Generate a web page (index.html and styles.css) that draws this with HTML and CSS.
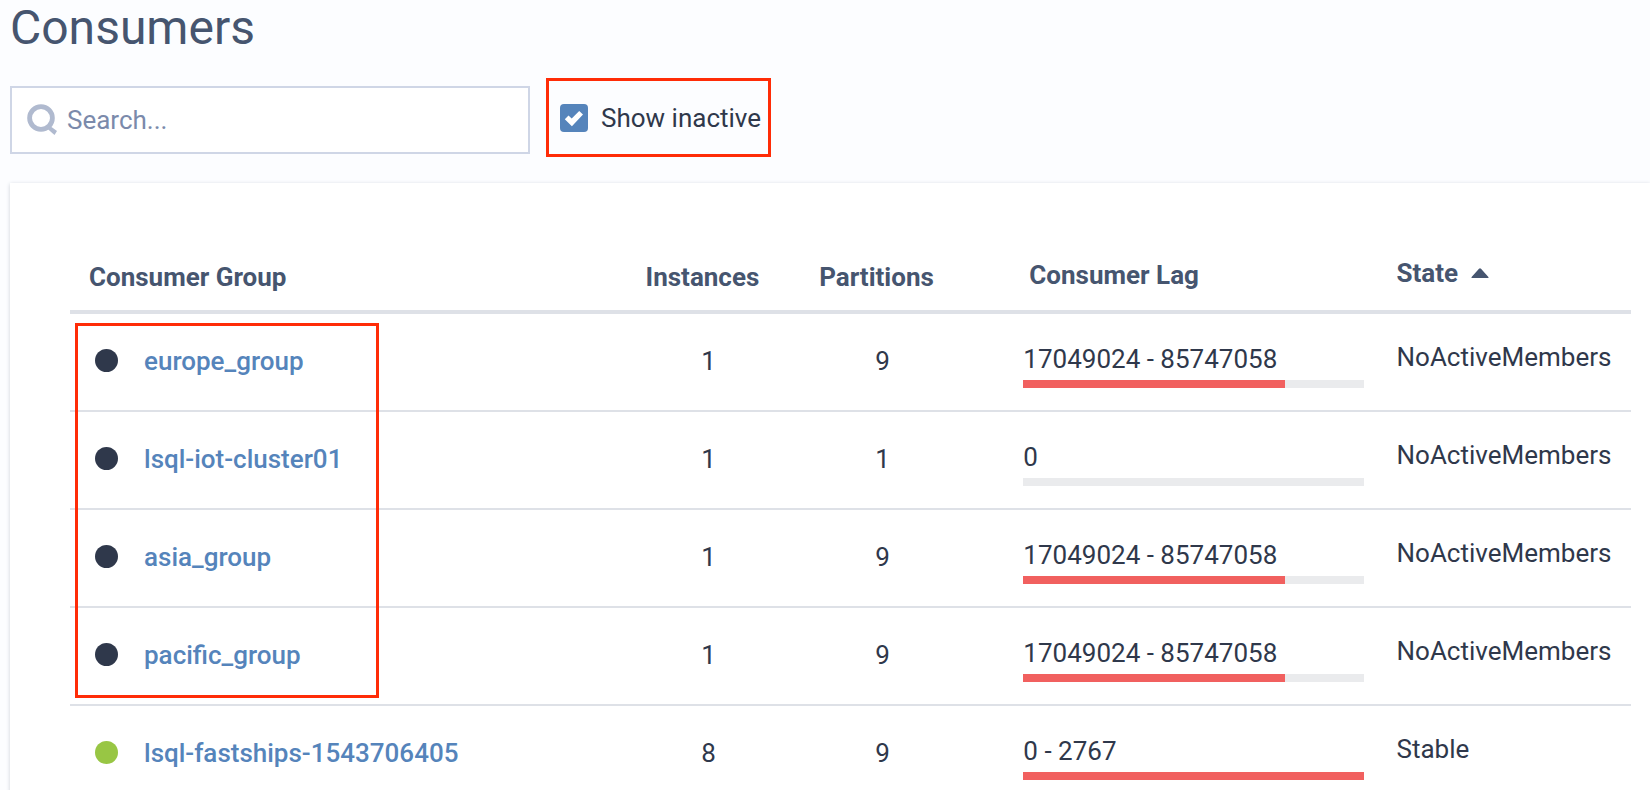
FILE: index.html
```html
<!DOCTYPE html>
<html lang="en">
<head>
<meta charset="utf-8">
<title>Consumers</title>
<link rel="stylesheet" href="styles.css">
</head>
<body>
<main class="page">
  <h1 class="title">Consumers</h1>
  <div class="toolbar">
    <label class="search">
      <svg class="search-icon" viewBox="0 0 30 31" aria-hidden="true"><circle cx="14" cy="14" r="11.4" fill="none" stroke="currentColor" stroke-width="4.8"/><path d="M21 20.5l9 6.5-2.5 4-8-7z" fill="currentColor"/></svg>
      <input class="search-input" type="text" placeholder="Search..." aria-label="Search">
    </label>
    <label class="toggle highlight">
      <input class="toggle-box" type="checkbox" checked>
      <svg class="toggle-tick" viewBox="0 0 28 28" aria-hidden="true"><path d="M4.800 15.300L8.500 11.600L11.700 14.400L19.200 7L23 10.600L11.900 22.300Z" fill="#fff"/></svg>
      <span>Show inactive</span>
    </label>
  </div>
  <section class="card">
    <div class="table-wrap">
      <table class="consumers">
        <colgroup><col class="col-group"><col class="col-instances"><col class="col-partitions"><col class="col-lag"><col class="col-state"></colgroup>
        <thead>
          <tr><th class="group">Consumer Group</th><th class="count">Instances</th><th class="count">Partitions</th><th class="lag">Consumer Lag</th><th class="state" aria-sort="ascending"><button class="sort" type="button">State<svg class="sort-icon" viewBox="0 0 18 10" aria-hidden="true"><path d="M1 10Q0 10 .6 9L8 .8Q9-.4 10 .8L17.400 9Q18 10 17 10Z" fill="currentColor"/></svg></button></th></tr>
        </thead>
        <tbody>
          <tr><td class="group"><div class="name"><span class="dot"></span><a href="#europe">europe_group</a></div></td><td class="count">1</td><td class="count">9</td><td class="lag">17049024 - 85747058<div class="bar"><div class="fill" style="width:77%"></div></div></td><td class="state">NoActiveMembers</td></tr>
          <tr><td class="group"><div class="name"><span class="dot"></span><a href="#iot">lsql-iot-cluster01</a></div></td><td class="count">1</td><td class="count">1</td><td class="lag">0<div class="bar"><div class="fill" style="width:0%"></div></div></td><td class="state">NoActiveMembers</td></tr>
          <tr><td class="group"><div class="name"><span class="dot"></span><a href="#asia">asia_group</a></div></td><td class="count">1</td><td class="count">9</td><td class="lag">17049024 - 85747058<div class="bar"><div class="fill" style="width:77%"></div></div></td><td class="state">NoActiveMembers</td></tr>
          <tr><td class="group"><div class="name"><span class="dot"></span><a href="#pacific">pacific_group</a></div></td><td class="count">1</td><td class="count">9</td><td class="lag">17049024 - 85747058<div class="bar"><div class="fill" style="width:77%"></div></div></td><td class="state">NoActiveMembers</td></tr>
          <tr><td class="group"><div class="name"><span class="dot dot-active"></span><a href="#fastships">lsql-fastships-1543706405</a></div></td><td class="count">8</td><td class="count">9</td><td class="lag">0 - 2767<div class="bar"><div class="fill" style="width:100%"></div></div></td><td class="state">Stable</td></tr>
        </tbody>
      </table>
      <div class="group-highlight highlight"></div>
    </div>
  </section>
</main>
</body>
</html>
```
FILE: styles.css
```css
* { box-sizing: border-box; }

body {
  margin: 0;
  height: 100vh;
  overflow: hidden;
  background: #fcfdff;
  color: #2f384b;
  font: 26px/32px Roboto, sans-serif;
}

.page { padding-left: 10px; }

.title {
  margin: 0;
  font-size: 48px;
  font-weight: 400;
  line-height: 56px;
  color: #46556f;
}

.toolbar {
  display: flex;
  align-items: center;
  gap: 16px;
  margin-top: 22px;
}

.highlight { border: 3px solid #ff2c07; }

.search {
  display: flex;
  align-items: center;
  gap: 10px;
  width: 520px;
  height: 68px;
  margin-top: 4px;
  padding: 0 16px 0 15px;
  border: 2px solid #cfd6e6;
  background: #fff;
}

.search-icon {
  flex: none;
  width: 30px;
  height: 31px;
  color: #b0bacf;
}

.search-input {
  flex: 1;
  min-width: 0;
  padding: 0;
  border: 0;
  outline: 0;
  background: none;
  color: #2f384b;
  font: inherit;
}

.search-input::placeholder { color: #7b8aab; opacity: 1; }

.toggle {
  display: grid;
  grid-template-columns: 28px auto;
  align-items: center;
  column-gap: 13px;
  height: 79px;
  padding: 0 7px 0 11px;
}

.toggle-box {
  appearance: none;
  grid-area: 1 / 1;
  width: 28px;
  height: 28px;
  margin: 0;
  border-radius: 4px;
  background: #dfe3ea;
}

.toggle-box:checked { background: #5584bb; }

.toggle-tick {
  grid-area: 1 / 1;
  width: 28px;
  height: 28px;
  pointer-events: none;
}

.card {
  margin-top: 26px;
  padding: 60px 19px 0 60px;
  background: #fff;
  box-shadow: 0 1px 4px #cdd1d7;
}

.table-wrap { position: relative; }

.consumers {
  width: 100%;
  table-layout: fixed;
  border-collapse: separate;
  border-spacing: 0;
}

.col-group { width: 35.7%; }
.col-instances { width: 10.4%; }
.col-partitions { width: 11.9%; }
.col-lag { width: 25.7%; }

th, td { padding: 0; text-align: left; vertical-align: top; white-space: nowrap; }

th {
  height: 71px;
  padding-top: 18px;
  border-bottom: 4px solid #dee1e7;
  color: #46556f;
  font-weight: 700;
}

td {
  height: 98px;
  padding-top: 31px;
  border-bottom: 2px solid #dee1e7;
}

th.group { padding-left: 19px; }
td.group { padding-left: 25px; }
.count { text-align: center; }
th.count { padding-right: 12px; }
.lag { padding-right: 13px; padding-left: 48px; }
th.lag { padding-top: 16px; padding-left: 54px; }
td.lag { padding-top: 29px; }
th.state { padding-top: 14px; padding-left: 20px; }
td.state { padding-top: 27px; padding-left: 20px; }

.name { display: flex; gap: 26px; }
.name a { color: #5584bb; font-weight: 500; text-decoration: none; }

.dot {
  flex: none;
  width: 23px;
  height: 23px;
  margin-top: 4px;
  border-radius: 50%;
  background: #2f384b;
}

.dot-active { background: #98c644; }

.bar {
  height: 8px;
  margin-top: 5px;
  background: #eaebed;
}

.fill { height: 100%; background: #f1605f; }

.sort {
  display: inline-flex;
  align-items: center;
  gap: 13px;
  padding: 0;
  border: 0;
  background: none;
  color: inherit;
  font: inherit;
}

.sort-icon { width: 18px; height: 10px; }

.group-highlight {
  position: absolute;
  top: 80px;
  left: 5px;
  width: 304px;
  height: 375px;
  pointer-events: none;
}
```
